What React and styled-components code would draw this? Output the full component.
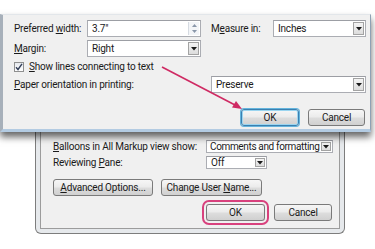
import React from "react";
import styled, { createGlobalStyle, css } from "styled-components";

const Global = createGlobalStyle`
  html, body { margin: 0; padding: 0; background: #ffffff; overflow: hidden; }
  * { box-sizing: border-box; }
`;

const Stage = styled.div`
  position: relative;
  width: 375px;
  height: 249px;
  overflow: hidden;
  background: #ffffff;
  font-family: Roboto, "Liberation Sans", sans-serif;
  font-size: 10px;
  letter-spacing: -0.2px;
  color: #1a1a1a;
`;

/* ---------- back window (Track Changes Options) ---------- */
const BackWindow = styled.div`
  position: absolute;
  left: 35px;
  top: 100px;
  width: 310px;
  height: 134px;
  border: 1px solid #7d7d7d;
  border-top: none;
  border-radius: 0 0 6px 6px;
  background: #e6e9ec;
  padding: 0 4px 4px 4px;
`;

const BackPanel = styled.div`
  height: 100%;
  border: 1px solid #9c9c9c;
  border-top: none;
  background: #f0f0f0;
  padding: 40px 7px 0 12px;
  display: flex;
  flex-direction: column;
`;

const BackGrid = styled.div`
  display: grid;
  grid-template-columns: 153px auto;
  row-gap: 3px;
  align-items: center;
`;

const ButtonRow = styled.div`
  display: flex;
  gap: ${(p) => p.$gap || 8}px;
  margin-top: ${(p) => p.$top || 0}px;
  justify-content: ${(p) => (p.$end ? "flex-end" : "flex-start")};
`;

/* ---------- front window (Table Properties / position) ---------- */
const FrontWindow = styled.div`
  position: absolute;
  left: 0;
  top: 14px;
  width: 371px;
  height: 118px;
  background: #f0f0f0;
  border-top: 1px solid #e2e6ea;
  border-left: 3px solid #a7b0ba;
  border-right: 1px solid #8ea1b4;
  border-bottom: 3px solid #b3cbe2;
  box-shadow: 0 5px 7px rgba(0, 0, 0, 0.6);
  padding: 5px 0 0 11px;
  z-index: 2;
`;

const FrontGrid = styled.div`
  display: grid;
  grid-template-columns: 73px 114px 72px 93px;
  grid-template-rows: 17px 17px 13px 17px;
  row-gap: 3px;
  align-items: center;
`;

const Label = styled.div`
  white-space: nowrap;
  padding-left: ${(p) => p.$pad || 0}px;
  grid-column: ${(p) => p.$span || "auto"};
`;

const Key = styled.span`
  text-decoration: underline;
  text-underline-offset: 1px;
`;

const Field = styled.div`
  position: relative;
  height: ${(p) => p.$h || 17}px;
  width: ${(p) => (p.$w ? `${p.$w}px` : "auto")};
  background: #ffffff;
  border: 1px solid #abadb3;
  border-top-color: #9c9ea4;
  display: flex;
  align-items: center;
  padding-left: ${(p) => p.$pl || 4}px;
  white-space: nowrap;
  grid-column: ${(p) => p.$span || "auto"};
  justify-self: ${(p) => p.$justify || "stretch"};
`;

const FieldText = styled.span`
  flex: 1;
  min-width: 0;
  letter-spacing: ${(p) => (p.$tight ? "-0.35px" : "inherit")};
`;

const DropBtn = styled.div`
  align-self: stretch;
  flex: none;
  width: ${(p) => p.$w || 11}px;
  margin: 1px;
  border: 1px solid #a3a3a3;
  background: linear-gradient(#f4f4f4, #dcdcdc);
  display: flex;
  align-items: center;
  justify-content: center;
`;

const Spin = styled.div`
  align-self: stretch;
  width: 11px;
  margin: 1px;
  display: flex;
  flex-direction: column;
  justify-content: space-around;
  align-items: center;
  background: #f3f5f8;
  border-left: 1px solid #d6dbe2;
`;

const CheckRow = styled.div`
  grid-column: 1 / 5;
  display: flex;
  align-items: center;
  gap: 5px;
`;

const Box = styled.div`
  width: 10px;
  height: 10px;
  border: 1px solid #8e8f8f;
  background: linear-gradient(#e6e9ee, #ffffff);
  display: flex;
  align-items: center;
  justify-content: center;
`;

const FrontButtons = styled.div`
  display: flex;
  justify-content: flex-end;
  gap: 9px;
  margin-top: 16px;
  padding-right: 1px;
  width: 352px;
`;

const focusRing = css`
  border-color: #3b7fb0;
  box-shadow: 0 0 0 1px #64b4dc, inset 0 0 0 1px #9ad5f0;
`;

const pinkRing = css`
  box-shadow: 0 0 0 2px #f0f0f0, 0 0 0 4px #d8417d;
`;

const Button = styled.div`
  width: ${(p) => p.$w}px;
  height: ${(p) => p.$h || 17}px;
  border: 1px solid #7a7a7a;
  border-radius: 3px;
  background: linear-gradient(#f6f6f6 0%, #ebebeb 48%, #dddddd 52%, #d0d0d0 100%);
  display: flex;
  align-items: center;
  justify-content: center;
  white-space: nowrap;
  ${(p) => p.$focus && focusRing}
  ${(p) => p.$pink && pinkRing}
`;

const Caption = styled.span`
  white-space: pre;
`;

const Pointer = styled.svg`
  position: absolute;
  left: 0;
  top: 0;
  width: 375px;
  height: 249px;
  z-index: 3;
  pointer-events: none;
`;

const DownArrow = () => (
  <svg width="6" height="4" viewBox="0 0 6 4">
    <polygon points="0,0 6,0 3,3.5" fill="#1a1a1a" />
  </svg>
);

const Tick = () => (
  <svg width="8" height="8" viewBox="0 0 8 8">
    <path d="M1 4.2 L3 6.5 L7 0.8" fill="none" stroke="#34405a" strokeWidth="1.4" />
  </svg>
);

const SpinArrows = () => (
  <>
    <svg width="5" height="3" viewBox="0 0 5 3"><polygon points="0,3 5,3 2.5,0" fill="#8a97aa" /></svg>
    <svg width="5" height="3" viewBox="0 0 5 3"><polygon points="0,0 5,0 2.5,3" fill="#8a97aa" /></svg>
  </>
);

export default function App() {
  return (
    <>
      <Global />
      <Stage>
        <BackWindow>
          <BackPanel>
            <BackGrid>
              <Label><Key>B</Key>alloons in All Markup view show:</Label>
              <Field $h={13} $w={127} $pl={3}>
                <FieldText $tight>Comments and formatting</FieldText>
                <DropBtn $w={10}><DownArrow /></DropBtn>
              </Field>
              <Label>Reviewing <Key>P</Key>ane:</Label>
              <Field $h={13} $w={61}>
                <FieldText>Off</FieldText>
                <DropBtn $w={10}><DownArrow /></DropBtn>
              </Field>
            </BackGrid>
            <ButtonRow $top={10} $gap={8}>
              <Button $w={100}><Caption><Key>A</Key>dvanced Options...</Caption></Button>
              <Button $w={101}><Caption>Change User <Key>N</Key>ame...</Caption></Button>
            </ButtonRow>
            <ButtonRow $top={8} $gap={9} $end>
              <Button $w={59} $pink><Caption>OK</Caption></Button>
              <Button $w={58}><Caption>Cancel</Caption></Button>
            </ButtonRow>
          </BackPanel>
        </BackWindow>

        <FrontWindow>
          <FrontGrid>
            <Label>Preferred <Key>w</Key>idth:</Label>
            <Field>
              <FieldText>3.7"</FieldText>
              <Spin><SpinArrows /></Spin>
            </Field>
            <Label $pad={10}>M<Key>e</Key>asure in:</Label>
            <Field>
              <FieldText>Inches</FieldText>
              <DropBtn><DownArrow /></DropBtn>
            </Field>

            <Label><Key>M</Key>argin:</Label>
            <Field>
              <FieldText>Right</FieldText>
              <DropBtn><DownArrow /></DropBtn>
            </Field>
            <div />
            <div />

            <CheckRow>
              <Box><Tick /></Box>
              <span><Key>S</Key>how lines connecting to text</span>
            </CheckRow>

            <Label $span="1 / 3"><Key>P</Key>aper orientation in printing:</Label>
            <Field $span="3 / 5" $w={155} $justify="end">
              <FieldText>Preserve</FieldText>
              <DropBtn><DownArrow /></DropBtn>
            </Field>
          </FrontGrid>
          <FrontButtons>
            <Button $w={58} $focus><Caption>OK</Caption></Button>
            <Button $w={57}><Caption>Cancel</Caption></Button>
          </FrontButtons>
        </FrontWindow>

        <Pointer viewBox="0 0 375 249">
          <line x1="162" y1="67" x2="235" y2="105" stroke="#cf2a63" strokeWidth="1.6" />
          <polygon points="242,109 232,107.5 236,101" fill="#cf2a63" />
        </Pointer>
      </Stage>
    </>
  );
}
